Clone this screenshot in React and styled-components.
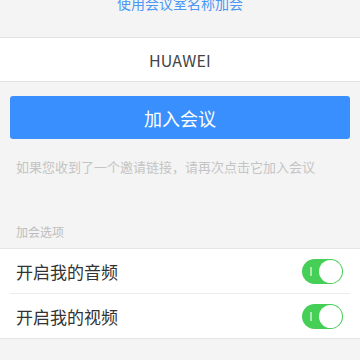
import styled, { createGlobalStyle } from "styled-components";

const GlobalStyle = createGlobalStyle`
  html, body {
    margin: 0;
    padding: 0;
    background: #f4f4f4;
    font-family: "Noto Sans CJK SC", "Noto Sans", sans-serif;
  }
`;

const Page = styled.div`
  width: 360px;
  height: 360px;
  overflow: hidden;
  background: #f4f4f4;
`;

const TopLink = styled.div`
  margin-top: -7px;
  height: 44px;
  text-align: center;
  font-size: 14px;
  line-height: 20px;
  color: #4a97f5;
`;

const InputBox = styled.div`
  height: 43px;
  background: #fff;
  border-top: 1px solid #e2e2e2;
  border-bottom: 1px solid #e2e2e2;
  display: flex;
  align-items: center;
  justify-content: center;
  font-size: 16px;
  color: #444;
  letter-spacing: 0.2px;
`;

const ButtonWrap = styled.div`
  padding: 14px 10px 0;
`;

const JoinButton = styled.button`
  width: 100%;
  height: 43px;
  border: none;
  border-radius: 3px;
  background: #3a8ffe;
  color: #fff;
  font-family: inherit;
  font-size: 18px;
  display: flex;
  align-items: center;
  justify-content: center;
  padding: 0;
`;

const Hint = styled.div`
  padding: 18px 16px 0;
  font-size: 13px;
  line-height: 20px;
  color: #c4c4c4;
`;

const SectionTitle = styled.div`
  padding: 45px 16px 0;
  height: 26px;
  box-sizing: content-box;
  font-size: 12px;
  line-height: 20px;
  color: #bdbdbd;
`;

const Section = styled.div`
  background: #fff;
  border-top: 1px solid #e6e6e6;
  border-bottom: 1px solid #e6e6e6;
`;

const Row = styled.div`
  height: 44px;
  margin: 0 10px;
  padding: 0 6px;
  display: flex;
  align-items: center;
  justify-content: space-between;
  font-size: 17px;
  color: #333;
  border-bottom: ${({ $last }) => ($last ? "none" : "1px solid #ececec")};
`;

const Toggle = styled.div`
  position: relative;
  width: 41px;
  height: 25px;
  border-radius: 13px;
  background: #45cf57;
  margin-right: 1px;
  flex-shrink: 0;

  &::before {
    content: "";
    position: absolute;
    left: 8px;
    top: 8px;
    width: 1.5px;
    height: 9px;
    background: rgba(255, 255, 255, 0.55);
  }

  &::after {
    content: "";
    position: absolute;
    right: 1px;
    top: 1px;
    width: 23px;
    height: 23px;
    border-radius: 50%;
    background: #fff;
  }
`;

export default function App() {
  return (
    <Page>
      <GlobalStyle />
      <TopLink>使用会议室名称加会</TopLink>
      <InputBox>HUAWEI</InputBox>
      <ButtonWrap>
        <JoinButton>加入会议</JoinButton>
      </ButtonWrap>
      <Hint>如果您收到了一个邀请链接，请再次点击它加入会议</Hint>
      <SectionTitle>加会选项</SectionTitle>
      <Section>
        <Row>
          开启我的音频
          <Toggle />
        </Row>
        <Row $last>
          开启我的视频
          <Toggle />
        </Row>
      </Section>
    </Page>
  );
}
